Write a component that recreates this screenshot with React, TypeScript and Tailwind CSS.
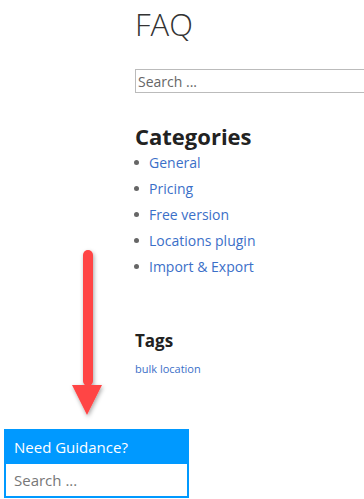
import React from "react";

const categories = ["General", "Pricing", "Free version", "Locations plugin", "Import & Export"];

const Arrow = () => (
    <svg className="absolute left-[68px] top-[246px]" width="40" height="176" viewBox="0 0 40 176">
        <defs>
            <filter id="sh" x="-50%" y="-20%" width="200%" height="140%">
                <feDropShadow dx="1" dy="2" stdDeviation="2" floodColor="#000" floodOpacity="0.35" />
            </filter>
        </defs>
        <g filter="url(#sh)" fill="#ff4444">
            <rect x="15" y="4" width="10" height="136" rx="5" />
            <polygon points="4,139 34,139 19,169" />
        </g>
    </svg>
);

const Widget = () => (
    <div className="absolute left-[4px] top-[429px] w-[185px] border-2 border-[#0099ff]">
        <div className="h-[33px] bg-[#0099ff] pl-[8px] flex items-center text-[15px] text-white">Need Guidance?</div>
        <div className="h-[32px] bg-white pl-[8px] flex items-center text-[15px] text-[#777]">Search ...</div>
    </div>
);

export default function App() {
    return (
        <div className="relative h-[499px] w-[364px] overflow-hidden bg-white font-['Open_Sans',sans-serif]">
            <div className="pl-[135px]">
                <h1 className="pt-[4px] text-[31px] leading-[40px] font-light text-[#333]">FAQ</h1>
                <div className="mt-[25px] h-[24px] w-[260px] border border-[#bbb] pl-[2px] flex items-center text-[14px] text-[#666]">
                    Search ...
                </div>
                <h2 className="mt-[28px] text-[22px] leading-[30px] font-bold text-[#222]">Categories</h2>
                <ul className="-mt-[2px]">
                    {categories.map((c) => (
                        <li key={c} className="flex items-center h-[26px] text-[14px]">
                            <span className="ml-[-1px] mr-[10px] h-[5px] w-[5px] rounded-full bg-[#666]" />
                            <span className="text-[#3b6fc8]">{c}</span>
                        </li>
                    ))}
                </ul>
                <h3 className="mt-[50px] text-[17px] leading-[24px] font-bold text-[#222]">Tags</h3>
                <div className="mt-[8px] text-[11px] text-[#3b6fc8]">bulk location</div>
            </div>
            <Arrow />
            <Widget />
        </div>
    );
}
